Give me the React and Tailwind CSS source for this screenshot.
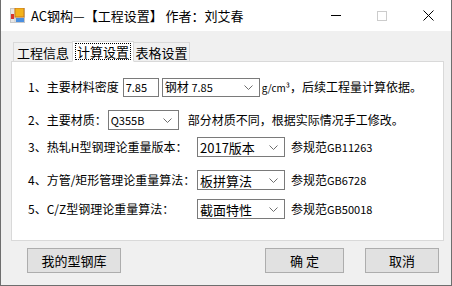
import { useState } from "react";

const cjk = { fontFamily: '"Noto Sans CJK SC", "Noto Sans", sans-serif' };

function Chevron() {
  return (
    <svg width="9" height="5" viewBox="0 0 9 5" className="shrink-0">
      <path d="M0.5 0.5 L4.5 4.5 L8.5 0.5" fill="none" stroke="#6d6d6d" strokeWidth="1" />
    </svg>
  );
}

function Combo({ value, width, small }) {
  return (
    <div
      className={`${width} h-[20px] bg-white border border-[#7a7a7a] flex items-center justify-between pl-[2px] pr-[6px] shrink-0`}
    >
      <span className={small ? "text-[11px] leading-none" : "text-[13px] leading-none"}>{value}</span>
      <Chevron />
    </div>
  );
}

function WinButton({ text, width }) {
  return (
    <button className={`${width} h-[25px] bg-[#e1e1e1] border border-[#adadad] text-[13px] text-black`}>
      {text}
    </button>
  );
}

const versions = [
  { label: "3、热轧H型钢理论重量版本：", value: "2017版本", code: "GB11263", mt: "mt-[5px]" },
  { label: "4、方管/矩形管理论重量算法：", value: "板拼算法", code: "GB6728", mt: "mt-[11px]" },
  { label: "5、C/Z型钢理论重量算法：", value: "截面特性", code: "GB50018", mt: "mt-[7px]" },
];

export default function App() {
  const [tab] = useState("计算设置");
  const tabs = ["工程信息", "计算设置", "表格设置"];
  const widths = { 工程信息: "w-[59px]", 计算设置: "w-[62px]", 表格设置: "w-[56px]" };

  return (
    <div
      className="w-[452px] h-[286px] flex flex-col border-x border-b border-[#6e6e6e] bg-[#f0f0f0] text-[12px] text-black overflow-hidden"
      style={cjk}
    >
      {/* title bar */}
      <div className="h-[31px] bg-white flex items-center shrink-0">
        <svg width="15" height="15" viewBox="0 0 15 15" className="ml-[9px] mr-[6px]">
          <rect x="0.5" y="0.5" width="14" height="14" fill="#e6e6e6" stroke="#c8c8c8" />
          <line x1="5" y1="0" x2="5" y2="15" stroke="#c8c8c8" />
          <line x1="0" y1="10" x2="15" y2="10" stroke="#c8c8c8" />
          <rect x="5" y="0" width="9" height="9" fill="#f2b21a" stroke="#c9791a" />
          <rect x="1" y="6" width="3" height="5" fill="#d9342b" />
          <rect x="6" y="10" width="8" height="4" fill="#4a8fe0" />
        </svg>
        <span className="text-[13px]">AC钢构—【工程设置】 作者：刘艾春</span>
        <div className="ml-auto flex items-center h-full">
          <div className="w-[46px] flex justify-center">
            <div className="w-[10px] h-px bg-black" />
          </div>
          <div className="w-[46px] flex justify-center">
            <div className="w-[10px] h-[10px] border border-[#cccccc]" />
          </div>
          <div className="w-[46px] flex justify-center">
            <svg width="11" height="11" viewBox="0 0 11 11">
              <path d="M0.5 0.5 L10.5 10.5 M10.5 0.5 L0.5 10.5" stroke="#000" strokeWidth="1" />
            </svg>
          </div>
        </div>
      </div>

      {/* tabs */}
      <div className="flex items-end h-[30px] pl-[12px] shrink-0">
        {tabs.map((t) => {
          const active = t === tab;
          return (
            <div
              key={t}
              className={`${widths[t]} flex items-center justify-center border border-[#d9d9d9] ${
                active ? "h-[21px] bg-white border-b-white -mb-px z-10" : "h-[19px] bg-[#f0f0f0] border-b-0"
              } ${t === "工程信息" ? "border-r-0" : ""} ${t === "表格设置" ? "border-l-0" : ""}`}
            >
              <span className={`text-[13px] leading-[15px] px-px ${active ? "border border-dotted border-black" : ""}`}>
                {t}
              </span>
            </div>
          );
        })}
      </div>

      {/* panel */}
      <div className="ml-[10px] mr-[7px] h-[180px] bg-white border border-[#d9d9d9] pl-[16px] flex flex-col shrink-0">
        <div className="h-[22px] flex items-center mt-[14px]">
          <span className="shrink-0">1、主要材料密度</span>
          <div className="ml-[4px] w-[36px] h-[19px] border border-[#7a7a7a] flex items-center pl-[2px] text-[11px]">
            7.85
          </div>
          <div className="ml-[3px] w-[98px] h-[19px] border border-[#7a7a7a] flex items-center justify-between pl-[2px] pr-[6px]">
            <span>
              钢材 <span className="text-[11px]">7.85</span>
            </span>
            <Chevron />
          </div>
          <span className="ml-[2px] whitespace-nowrap">
            <span className="text-[10px]">g/cm³</span>，后续工程量计算依据。
          </span>
        </div>
        <div className="h-[22px] flex items-center mt-[11px]">
          <span className="shrink-0">2、主要材质：</span>
          <div className="ml-[1px]">
            <Combo value="Q355B" width="w-[71px]" small />
          </div>
          <span className="ml-[9px] whitespace-nowrap">部分材质不同，根据实际情况手工修改。</span>
        </div>
        {versions.map((v) => (
          <div key={v.code} className={`h-[22px] grid grid-cols-[169px_auto] items-center ${v.mt}`}>
            <span className="whitespace-nowrap">{v.label}</span>
            <div className="flex items-center">
              <Combo value={v.value} width="w-[88px]" />
              <span className="ml-[6px] whitespace-nowrap">
                参规范<span className="text-[11px]">{v.code}</span>
              </span>
            </div>
          </div>
        ))}
      </div>

      {/* buttons */}
      <div className="flex items-center mt-[7px] pl-[26px] pr-[12px]">
        <WinButton text="我的型钢库" width="w-[94px]" />
        <div className="ml-auto flex gap-[21px]">
          <WinButton text="确 定" width="w-[79px]" />
          <WinButton text="取消" width="w-[74px]" />
        </div>
      </div>
    </div>
  );
}
